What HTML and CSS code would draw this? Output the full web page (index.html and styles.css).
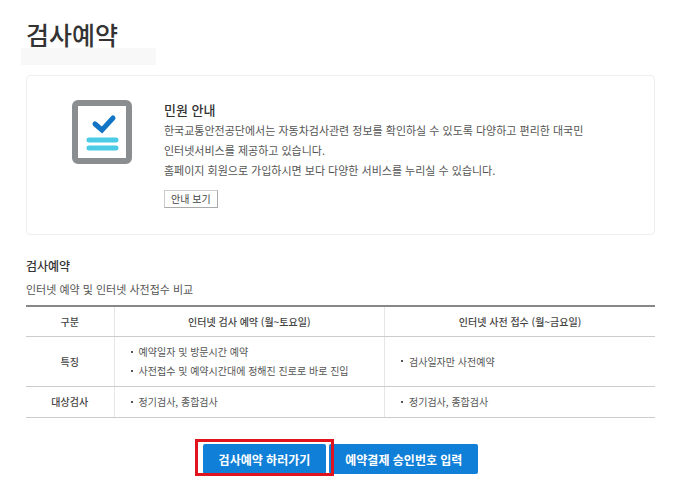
FILE: index.html
```html
<!DOCTYPE html>
<html lang="ko">
<head>
    <meta charset="UTF-8">
    <meta name="viewport" content="width=device-width, initial-scale=1.0">
    <title>검사예약</title>
    <link rel="stylesheet" href="styles.css">
</head>
<body>
    <main class="page">
        <header class="page-header">
            <h1>검사예약</h1>
            <div class="title-strip"></div>
        </header>

        <!-- 민원 안내 -->
        <section class="guide">
            <svg class="guide-icon" viewBox="0 0 60 64" aria-hidden="true">
                <rect x="3" y="3" width="54" height="58" rx="3" fill="#fff" stroke="#8b8e91" stroke-width="6"/>
                <path d="M23 24l7 6 11-12" fill="none" stroke="#1274c4" stroke-width="5"/>
                <path d="M17 40h27M17 48h27" fill="none" stroke="#4ccbe6" stroke-width="5"/>
            </svg>
            <div class="guide-body">
                <h2>민원 안내</h2>
                <p>한국교통안전공단에서는 자동차검사관련 정보를 확인하실 수 있도록 다양하고 편리한 대국민<br>
                인터넷서비스를 제공하고 있습니다.<br>
                홈페이지 회원으로 가입하시면 보다 다양한 서비스를 누리실 수 있습니다.</p>
                <button type="button" class="btn-small">안내 보기</button>
            </div>
        </section>

        <!-- 예약 비교표 -->
        <section class="compare">
            <h3>검사예약</h3>
            <p id="compare-desc">인터넷 예약 및 인터넷 사전접수 비교</p>
            <table aria-labelledby="compare-desc">
                <thead>
                    <tr>
                        <th class="col-label" scope="col">구분</th>
                        <th class="col-half" scope="col">인터넷 검사 예약 (월~토요일)</th>
                        <th class="col-half" scope="col">인터넷 사전 접수 (월~금요일)</th>
                    </tr>
                </thead>
                <tbody>
                    <tr>
                        <th scope="row">특징</th>
                        <td>
                            <ul>
                                <li>예약일자 및 방문시간 예약</li>
                                <li>사전접수 및 예약시간대에 정해진 진로로 바로 진입</li>
                            </ul>
                        </td>
                        <td>
                            <ul>
                                <li>검사일자만 사전예약</li>
                            </ul>
                        </td>
                    </tr>
                    <tr>
                        <th scope="row">대상검사</th>
                        <td>
                            <ul>
                                <li>정기검사, 종합검사</li>
                            </ul>
                        </td>
                        <td>
                            <ul>
                                <li>정기검사, 종합검사</li>
                            </ul>
                        </td>
                    </tr>
                </tbody>
            </table>
        </section>

        <!-- 하단 버튼 -->
        <div class="actions">
            <div class="highlight">
                <button type="button" class="btn">검사예약 하러가기</button>
            </div>
            <button type="button" class="btn">예약결제 승인번호 입력</button>
        </div>
    </main>
</body>
</html>
```

FILE: styles.css
```css
* {
    box-sizing: border-box;
}
body {
    margin: 0;
    background: #fff;
    color: #555;
    font-family: "Noto Sans CJK KR", sans-serif;
    font-size: 11px;
    line-height: 20px;
}
h1, h2, h3, p, ul {
    margin: 0;
    padding: 0;
}
button {
    font-family: inherit;
    cursor: pointer;
}
.page {
    padding: 20px 22px 20px 26px;
}
.page-header {
    position: relative;
    height: 55px;
}
h1 {
    color: #333;
    font-size: 25px;
    font-weight: 500;
    line-height: 28px;
}
.title-strip {
    position: absolute;
    left: -5px;
    top: 28px;
    width: 135px;
    height: 17px;
    background: #f8f8f8;
    z-index: -1;
}
.guide {
    display: flex;
    gap: 32px;
    padding: 24px 45px 26px;
    border: 1px solid #eee;
    border-radius: 4px;
}
.guide-icon {
    flex: none;
    width: 60px;
    height: 64px;
}
.guide-icon path {
    stroke-linecap: round;
}
h2 {
    color: #333;
    font-size: 13px;
    font-weight: 500;
    line-height: 20px;
}
.guide-body {
    flex: 1;
}
.btn-small {
    display: block;
    height: 18px;
    margin-top: 10px;
    padding: 0 6px;
    border: 1px solid #ccc;
    border-right-color: #aaa;
    border-bottom-color: #aaa;
    background: #fff;
    color: #444;
    font-size: 10px;
    line-height: 16px;
}
.compare {
    margin-top: 20px;
}
h3 {
    color: #333;
    font-size: 12px;
    font-weight: 500;
    line-height: 22px;
}
.compare p {
    line-height: 24px;
}
table {
    width: 100%;
    margin-top: 4px;
    border-collapse: collapse;
    border-top: 2px solid #888;
    table-layout: fixed;
    font-size: 10px;
    line-height: 19px;
}
.col-label {
    width: 14%;
}
.col-half {
    width: 43%;
}
th, td {
    padding: 5px 16px;
    border-bottom: 1px solid #ccc;
}
tbody th, tbody td {
    padding-bottom: 6px;
}
th {
    color: #444;
    font-weight: 500;
    text-align: center;
}
th + th, td {
    border-left: 1px solid #e6e6e6;
}
ul {
    list-style: none;
}
li {
    display: flex;
    align-items: center;
    gap: 6px;
}
li::before {
    content: "";
    width: 2px;
    height: 2px;
    background: #555;
}
.actions {
    display: flex;
    justify-content: center;
    gap: 3px;
    margin-top: 26px;
}
.highlight {
    position: relative;
}
/* 강조 테두리 */
.highlight::after {
    content: "";
    position: absolute;
    inset: -5px -8px -2px;
    border: 3px solid #e0141e;
    pointer-events: none;
}
.btn {
    height: 30px;
    padding: 0 16px;
    border: none;
    border-radius: 2px;
    background: #0f7fd8;
    color: #fff;
    font-size: 12px;
    font-weight: 700;
}
```
